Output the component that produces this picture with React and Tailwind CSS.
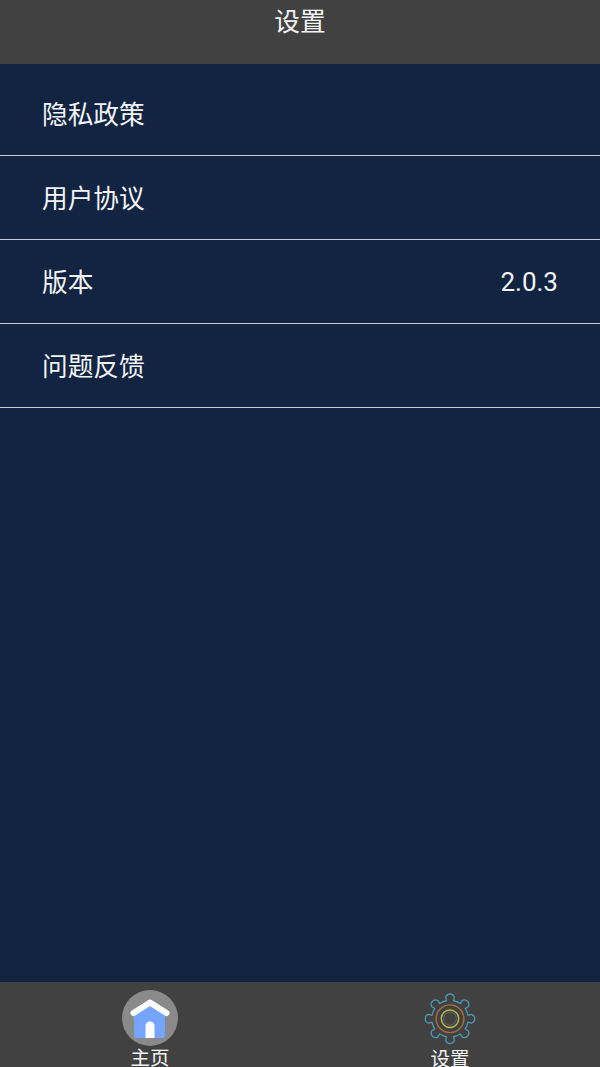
import React from "react";

function Row({ label, value, first }) {
  return (
    <div className={`flex items-center justify-between border-b border-[#c4cbd6] pl-[42px] pr-[42px] ${first ? "h-[92px] pt-[7px]" : "h-[84px]"}`}>
      <span className={first ? "" : "-mt-[1px]"}>{label}</span>
      {value && <span className="font-['Roboto',sans-serif] text-[26px]">{value}</span>}
    </div>
  );
}

function HomeIcon() {
  return (
    <svg width="56" height="56" viewBox="0 0 56 56" className="block">
      <circle cx="28" cy="28" r="28" fill="#8a8a8a" />
      <path d="M12 24 L28 12 L43 24 V46 Q43 48 41 48 H14 Q12 48 12 46 Z" fill="#76a5ff" />
      <path d="M11.5 23 L28 12.5 L44.5 23" fill="none" stroke="#ffffff" strokeWidth="6" strokeLinecap="round" strokeLinejoin="round" />
      <path d="M23.5 48 V36 a4.5 4.5 0 0 1 9 0 V48 Z" fill="#ffffff" />
    </svg>
  );
}

function GearIcon() {
  const teeth = 8;
  const cx = 26, cy = 26, ro = 25, ri = 18.5;
  let d = "";
  for (let i = 0; i < teeth; i++) {
    const a = (i * 2 * Math.PI) / teeth - Math.PI / 2;
    const w = 0.2, g = 0.19;
    const p = (r, t) => `${(cx + r * Math.cos(t)).toFixed(2)} ${(cy + r * Math.sin(t)).toFixed(2)}`;
    d += `${i === 0 ? "M" : "L"}${p(ri, a - g)} `;
    d += `L${p(ro - 3, a - w)} A4.5 4.5 0 0 1 ${p(ro - 3, a + w)} L${p(ri, a + g)} `;
    d += `A${ri} ${ri} 0 0 1 ${p(ri, a + Math.PI / 4 - g)} `;
  }
  d += "Z";
  return (
    <svg width="52" height="52" viewBox="0 0 52 52" className="block">
      <path d={d} fill="none" stroke="#4a9ab3" strokeWidth="1.3" strokeLinejoin="round" />
      <circle cx="26" cy="26" r="14" fill="none" stroke="#a8713c" strokeWidth="1.4" />
      <circle cx="26" cy="26" r="8.8" fill="none" stroke="#bdbb4c" strokeWidth="1.4" />
      <circle cx="26" cy="26" r="6.5" fill="none" stroke="#5f6a5c" strokeWidth="1" />
    </svg>
  );
}

export default function App() {
  return (
    <div className="flex h-[1067px] w-[600px] flex-col overflow-hidden bg-[#122441] font-['Noto_Sans_CJK_SC','Noto_Sans',sans-serif] text-[25.7px] leading-none text-[#f2f4f6]">
      <header className="flex h-[64px] shrink-0 justify-center bg-[#414141] pt-[7px]">
        <h1 className="font-normal">设置</h1>
      </header>
      <main className="flex-1">
        <Row label="隐私政策" first />
        <Row label="用户协议" />
        <Row label="版本" value="2.0.3" />
        <Row label="问题反馈" />
      </main>
      <nav className="grid h-[85px] shrink-0 grid-cols-2 bg-[#414141] text-[19.5px]">
        <div className="flex flex-col items-center overflow-hidden pt-[8px]">
          <HomeIcon />
          <span className="mt-[1px]">主页</span>
        </div>
        <div className="flex flex-col items-center overflow-hidden pt-[11px]">
          <GearIcon />
          <span className="mt-[3px]">设置</span>
        </div>
      </nav>
    </div>
  );
}
